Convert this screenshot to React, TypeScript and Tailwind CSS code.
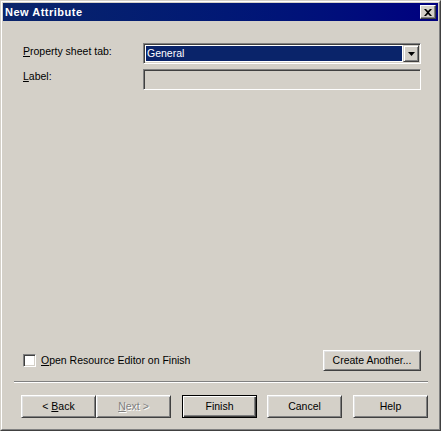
import React from "react";

const font = { fontFamily: '"Liberation Sans", Arial, sans-serif' };

function Btn({
  children,
  w,
  h = "h-[23px]",
  isDefault = false,
}: {
  children: React.ReactNode;
  w: string;
  h?: string;
  isDefault?: boolean;
}) {
  const bevel = isDefault
    ? "border border-black shadow-[inset_1px_1px_#ffffff,inset_-1px_-1px_#404040,inset_-2px_-2px_#808080]"
    : "border border-t-white border-l-white border-b-[#404040] border-r-[#404040] shadow-[inset_1px_1px_#dfdfdf,inset_-1px_-1px_#808080]";
  return (
    <div className={`${w} ${h} ${bevel} bg-[#d4d0c8] flex items-center justify-center text-[10.5px] text-black`}>
      {children}
    </div>
  );
}

export default function App() {
  return (
    <div style={font} className="w-[441px] h-[431px] bg-[#d4d0c8] border border-t-[#d4d0c8] border-l-[#d4d0c8] border-b-[#404040] border-r-[#404040]">
      <div className="w-full h-full border border-t-white border-l-white border-b-[#808080] border-r-[#808080] p-px flex flex-col">
        {/* title bar */}
        <div className="h-[18px] flex items-center justify-between pl-[2px] pr-[2px] bg-gradient-to-r from-[#0a246a] to-[#000080]">
          <span className="text-white font-bold text-[11px] tracking-[0.5px] leading-none">New Attribute</span>
          <div className="w-[16px] h-[14px] bg-[#d4d0c8] border border-t-white border-l-white border-b-[#404040] border-r-[#404040] shadow-[inset_-1px_-1px_#808080] flex items-center justify-center">
            <svg width="8" height="7" viewBox="0 0 8 7" className="mr-px">
              <path d="M0 0h2l2 2 2-2h2L5 3.5 8 7H6L4 5 2 7H0l3-3.5z" fill="#000" />
            </svg>
          </div>
        </div>

        {/* form */}
        <div className="pt-[22px] pl-[20px] pr-[17px] grid grid-cols-[120px_1fr] gap-y-[5px] text-[10.5px] text-black">
          <div className="pt-[2px] leading-[13px]">
            <span className="underline underline-offset-1">P</span>roperty sheet tab:
          </div>
          <div className="h-[21px] bg-white border border-t-[#808080] border-l-[#808080] border-b-white border-r-white shadow-[inset_1px_1px_#404040,inset_-1px_-1px_#d4d0c8] p-[2px] pr-[2px] flex">
            <div className="flex-1 bg-[#0a246a] text-white pl-[1px] leading-[15px] mr-px">General</div>
            <div className="w-[16px] h-[17px] -mt-px mr-[-1px] bg-[#d4d0c8] border border-t-[#d4d0c8] border-l-[#d4d0c8] border-b-[#404040] border-r-[#404040] shadow-[inset_1px_1px_#ffffff,inset_-1px_-1px_#808080] flex items-center justify-center">
              <svg width="7" height="4" viewBox="0 0 7 4">
                <path d="M0 0h7L3.5 4z" fill="#000" />
              </svg>
            </div>
          </div>
          <div className="pt-[1px] leading-[13px]">
            <span className="underline underline-offset-1">L</span>abel:
          </div>
          <div className="h-[21px] bg-[#d4d0c8] border border-t-[#808080] border-l-[#808080] border-b-white border-r-white shadow-[inset_1px_1px_#404040,inset_-1px_-1px_#d4d0c8]" />
        </div>

        <div className="flex-1" />

        {/* checkbox row */}
        <div className="pl-[20px] pr-[17px] flex items-center justify-between text-[10.5px] text-black">
          <div className="flex items-center gap-[5px]">
            <div className="w-[13px] h-[13px] bg-white border border-t-[#808080] border-l-[#808080] border-b-white border-r-white shadow-[inset_1px_1px_#404040,inset_-1px_-1px_#d4d0c8]" />
            <span>
              <span className="underline underline-offset-1">O</span>pen Resource Editor on Finish
            </span>
          </div>
          <Btn w="w-[98px]" h="h-[21px]">Create Another...</Btn>
        </div>

        {/* separator */}
        <div className="mt-[10px] ml-[11px] mr-[10px] h-[2px] border-t border-t-[#808080] border-b border-b-white" />

        {/* buttons */}
        <div className="mt-[12px] mb-[10px] pl-[18px] flex">
          <Btn w="w-[75px]">
            &lt;&nbsp;<span className="underline underline-offset-1">B</span>ack
          </Btn>
          <Btn w="w-[75px]">
            <span className="text-[#808080] [text-shadow:1px_1px_#ffffff]">
              <span className="underline underline-offset-1">N</span>ext &gt;
            </span>
          </Btn>
          <div className="ml-[11px]">
            <Btn w="w-[75px]" isDefault>Finish</Btn>
          </div>
          <div className="ml-[10px]">
            <Btn w="w-[75px]">Cancel</Btn>
          </div>
          <div className="ml-[11px]">
            <Btn w="w-[75px]">Help</Btn>
          </div>
        </div>
      </div>
    </div>
  );
}
